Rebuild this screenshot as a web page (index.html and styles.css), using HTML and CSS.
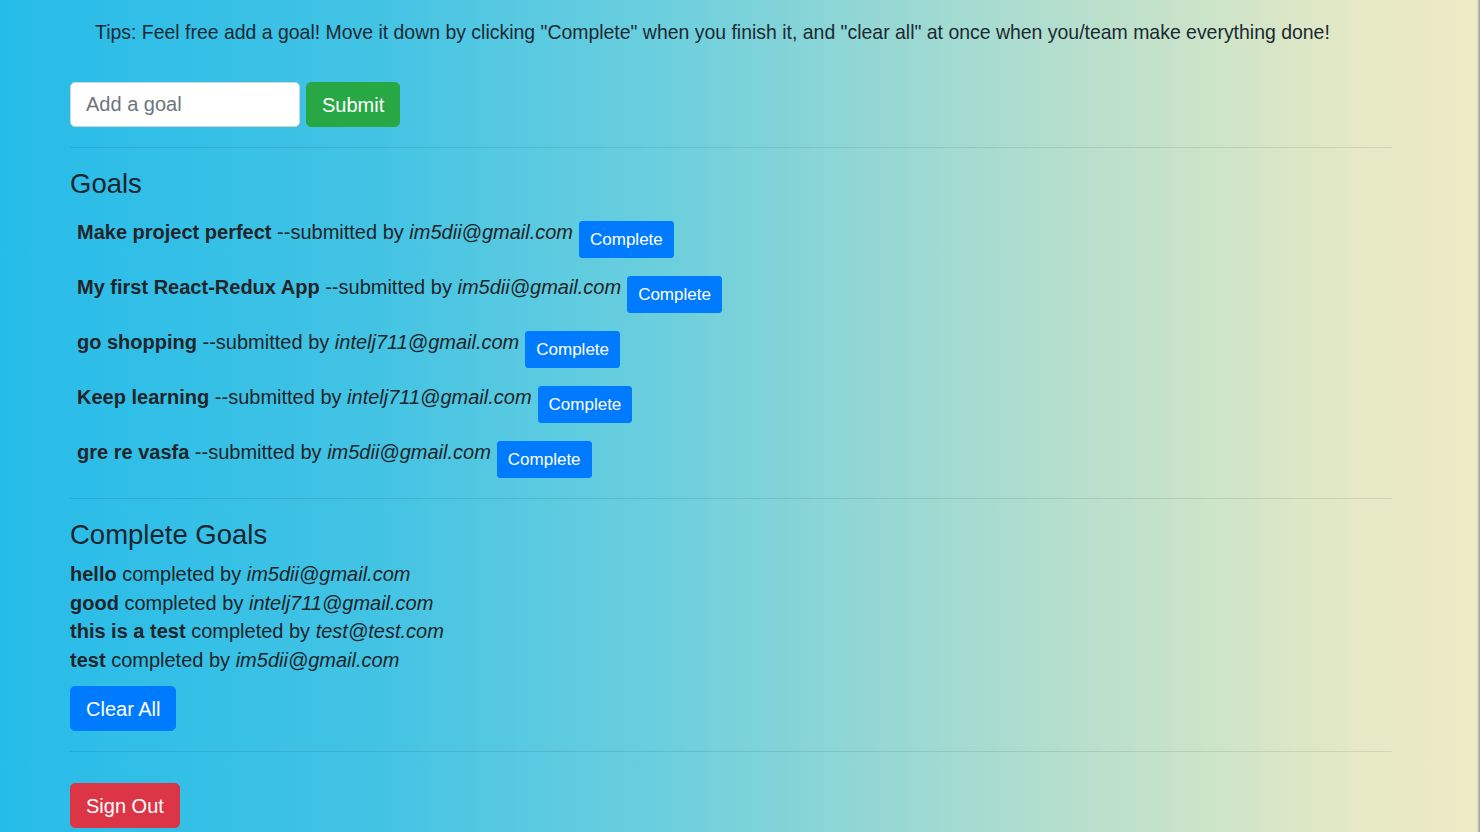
FILE: index.html
```html
<!DOCTYPE html>
<html lang="en">
<head>
<meta charset="utf-8">
<title>Goal Coach</title>
<link rel="stylesheet" href="styles.css">
</head>
<body>
<div class="page">
  <div class="content">
    <p class="tips">Tips: Feel free add a goal! Move it down by clicking "Complete" when you finish it, and "clear all" at once when you/team make everything done!</p>
    <form class="add-form">
      <input class="goal-input" type="text" placeholder="Add a goal">
      <button type="button" class="btn btn-lg btn-success">Submit</button>
    </form>
    <hr class="divider">
    <h4 class="section-title">Goals</h4>
    <div class="goal-list">
      <div class="goal-row"><span class="goal-text"><strong>Make project perfect</strong> --submitted by <em>im5dii@gmail.com</em></span><button type="button" class="btn btn-sm btn-primary">Complete</button></div>
      <div class="goal-row"><span class="goal-text"><strong>My first React-Redux App</strong> --submitted by <em>im5dii@gmail.com</em></span><button type="button" class="btn btn-sm btn-primary">Complete</button></div>
      <div class="goal-row"><span class="goal-text"><strong>go shopping</strong> --submitted by <em>intelj711@gmail.com</em></span><button type="button" class="btn btn-sm btn-primary">Complete</button></div>
      <div class="goal-row"><span class="goal-text"><strong>Keep learning</strong> --submitted by <em>intelj711@gmail.com</em></span><button type="button" class="btn btn-sm btn-primary">Complete</button></div>
      <div class="goal-row"><span class="goal-text"><strong>gre re vasfa</strong> --submitted by <em>im5dii@gmail.com</em></span><button type="button" class="btn btn-sm btn-primary">Complete</button></div>
    </div>
    <hr class="divider">
    <h4 class="section-title done-title">Complete Goals</h4>
    <div class="done-list">
      <div class="done-row"><strong>hello</strong> completed by <em>im5dii@gmail.com</em></div>
      <div class="done-row"><strong>good</strong> completed by <em>intelj711@gmail.com</em></div>
      <div class="done-row"><strong>this is a test</strong> completed by <em>test@test.com</em></div>
      <div class="done-row"><strong>test</strong> completed by <em>im5dii@gmail.com</em></div>
    </div>
    <button type="button" class="btn btn-lg btn-primary clear-btn">Clear All</button>
    <hr class="divider">
    <button type="button" class="btn btn-lg btn-danger signout-btn">Sign Out</button>
  </div>
  <div class="edge"></div>
</div>
</body>
</html>
```
FILE: styles.css
```css
* { box-sizing: border-box; }
html, body {
  margin: 0;
  padding: 0;
  height: 100%;
}
body {
  font-family: "Liberation Sans", Arial, Helvetica, sans-serif;
  font-size: 20px;
  line-height: 1.5;
  color: #212529;
  background: linear-gradient(to right, #26bce9 0%, #42c3e4 25%, #6ccfdd 45%, #9cd9d2 62%, #c8e3c9 80%, #e6e9c4 92%, #eeeac6 100%);
  overflow: hidden;
}
.page {
  display: flex;
  min-height: 100%;
}
.content {
  flex: 1;
  padding: 17px 85px 0 70px;
}
.edge {
  width: 3px;
  background: linear-gradient(to right, #ede9c5, #9a9a94);
}
.tips {
  margin: 0 0 35px 0;
  padding-left: 25px;
  font-size: 19.45px;
  line-height: 30px;
  color: #1c2a33;
}
.add-form {
  display: flex;
  gap: 6px;
}
.goal-input {
  width: 230px;
  height: 45px;
  padding: 0 15px;
  font-family: inherit;
  font-size: 20px;
  color: #495057;
  background: #fff;
  border: 1px solid #ced4da;
  border-radius: 5px;
  outline: none;
}
.goal-input::placeholder { color: #6c757d; }
.btn {
  font-family: inherit;
  color: #fff;
  border: 1px solid transparent;
  border-radius: 5px;
  cursor: pointer;
  line-height: 1.5;
  white-space: nowrap;
}
.btn-lg {
  height: 45px;
  padding: 0 15px;
  font-size: 20px;
}
.btn-sm {
  height: 37px;
  padding: 0 10px;
  font-size: 17px;
  border-radius: 3px;
}
.btn-success { background: #28a745; border-color: #28a745; }
.btn-primary { background: #007bff; border-color: #007bff; }
.btn-danger { background: #dc3545; border-color: #dc3545; }
.divider {
  margin: 20px 0;
  border: 0;
  border-top: 1.5px solid rgba(0, 0, 0, 0.09);
}
.section-title {
  margin: 0 0 17px 0;
  font-size: 27.5px;
  font-weight: 400;
  line-height: 32px;
  color: #1a2530;
}
.goal-row {
  display: flex;
  align-items: flex-start;
  padding-left: 7px;
  margin-bottom: 14px;
}
.goal-text {
  line-height: 30px;
}
.goal-row .btn {
  margin: 4px 0 0 6px;
}
.done-title {
  margin-bottom: 9px;
}
.done-row {
  line-height: 28.6px;
}
.clear-btn {
  margin-top: 12px;
  display: block;
}
.signout-btn {
  margin-top: 31px;
  display: block;
}
```
